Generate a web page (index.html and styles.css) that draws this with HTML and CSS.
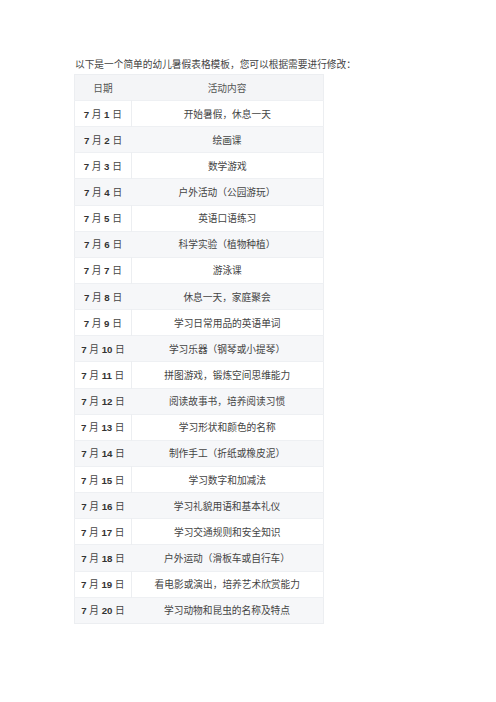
FILE: index.html
```html
<!DOCTYPE html>
<html lang="zh-CN">
<head>
<meta charset="utf-8">
<title>幼儿暑假表格模板</title>
<link rel="stylesheet" href="styles.css">
</head>
<body>
<div class="page">
  <p class="intro">以下是一个简单的幼儿暑假表格模板，您可以根据需要进行修改：</p>
  <table class="plan">
    <thead>
      <tr><th class="date">日期</th><th class="act">活动内容</th></tr>
    </thead>
    <tbody>
      <tr><td class="date"><b>7</b> 月 <b>1</b> 日</td><td class="act">开始暑假，休息一天</td></tr>
      <tr><td class="date"><b>7</b> 月 <b>2</b> 日</td><td class="act">绘画课</td></tr>
      <tr><td class="date"><b>7</b> 月 <b>3</b> 日</td><td class="act">数学游戏</td></tr>
      <tr><td class="date"><b>7</b> 月 <b>4</b> 日</td><td class="act">户外活动（公园游玩）</td></tr>
      <tr><td class="date"><b>7</b> 月 <b>5</b> 日</td><td class="act">英语口语练习</td></tr>
      <tr><td class="date"><b>7</b> 月 <b>6</b> 日</td><td class="act">科学实验（植物种植）</td></tr>
      <tr><td class="date"><b>7</b> 月 <b>7</b> 日</td><td class="act">游泳课</td></tr>
      <tr><td class="date"><b>7</b> 月 <b>8</b> 日</td><td class="act">休息一天，家庭聚会</td></tr>
      <tr><td class="date"><b>7</b> 月 <b>9</b> 日</td><td class="act">学习日常用品的英语单词</td></tr>
      <tr><td class="date"><b>7</b> 月 <b>10</b> 日</td><td class="act">学习乐器（钢琴或小提琴）</td></tr>
      <tr><td class="date"><b>7</b> 月 <b>11</b> 日</td><td class="act">拼图游戏，锻炼空间思维能力</td></tr>
      <tr><td class="date"><b>7</b> 月 <b>12</b> 日</td><td class="act">阅读故事书，培养阅读习惯</td></tr>
      <tr><td class="date"><b>7</b> 月 <b>13</b> 日</td><td class="act">学习形状和颜色的名称</td></tr>
      <tr><td class="date"><b>7</b> 月 <b>14</b> 日</td><td class="act">制作手工（折纸或橡皮泥）</td></tr>
      <tr><td class="date"><b>7</b> 月 <b>15</b> 日</td><td class="act">学习数字和加减法</td></tr>
      <tr><td class="date"><b>7</b> 月 <b>16</b> 日</td><td class="act">学习礼貌用语和基本礼仪</td></tr>
      <tr><td class="date"><b>7</b> 月 <b>17</b> 日</td><td class="act">学习交通规则和安全知识</td></tr>
      <tr><td class="date"><b>7</b> 月 <b>18</b> 日</td><td class="act">户外运动（滑板车或自行车）</td></tr>
      <tr><td class="date"><b>7</b> 月 <b>19</b> 日</td><td class="act">看电影或演出，培养艺术欣赏能力</td></tr>
      <tr><td class="date"><b>7</b> 月 <b>20</b> 日</td><td class="act">学习动物和昆虫的名称及特点</td></tr>
    </tbody>
  </table>
</div>
</body>
</html>
```

FILE: styles.css
```css
html, body {
  margin: 0;
  padding: 0;
  background: #ffffff;
}

.page {
  padding: 56px 0 0 74px;
  font-family: "Liberation Sans", "Noto Sans CJK SC", sans-serif;
  font-size: 9.7px;
  color: #444444;
}

.intro {
  margin: 0;
  height: 18px;
  line-height: 18px;
  white-space: nowrap;
  padding-left: 1px;
}

.plan {
  width: 250px;
  border-collapse: collapse;
  border: 1px solid #eceef1;
  table-layout: fixed;
}

.plan th,
.plan td {
  padding: 0;
  text-align: center;
  vertical-align: middle;
  white-space: nowrap;
}

.plan th {
  height: 25px;
  font-weight: normal;
  color: #555555;
  background: #f4f5f7;
}

.plan td {
  height: 26.15px;
  box-sizing: border-box;
  border-top: 1px solid #eef0f3;
}

.plan .date {
  width: 56px;
}

.plan td.date b {
  font-weight: bold;
  color: #333333;
}

.plan tbody tr:nth-child(odd) {
  background: #ffffff;
}

.plan tbody tr:nth-child(odd) td.date {
  border-right: 1px solid #eceef1;
}

.plan tbody tr:nth-child(even) {
  background: #f6f7f9;
}
```
